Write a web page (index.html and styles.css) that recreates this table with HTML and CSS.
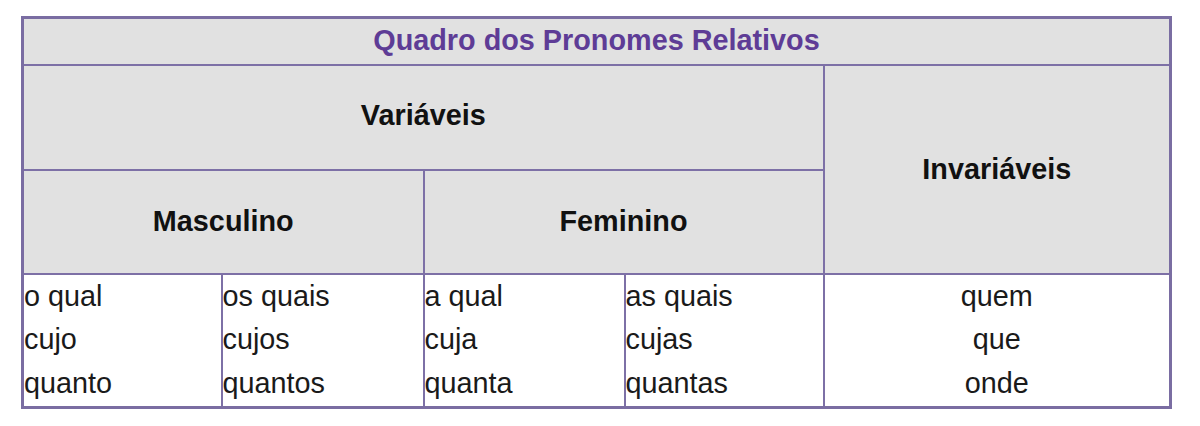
FILE: index.html
```html
<!DOCTYPE html>
<html lang="pt">
<head>
<meta charset="utf-8">
<title>Quadro dos Pronomes Relativos</title>
<link rel="stylesheet" href="styles.css">
</head>
<body>
<div class="wrap">
<table class="pron">
  <colgroup>
    <col class="c1"><col class="c2"><col class="c3"><col class="c4"><col class="c5">
  </colgroup>
  <tr class="r-title">
    <th colspan="5" class="title">Quadro dos Pronomes Relativos</th>
  </tr>
  <tr class="r-var">
    <th colspan="4" class="var">Variáveis</th>
    <th rowspan="2">Invariáveis</th>
  </tr>
  <tr class="r-gen">
    <th colspan="2">Masculino</th>
    <th colspan="2">Feminino</th>
  </tr>
  <tr class="r-data">
    <td>o qual<br>cujo<br>quanto</td>
    <td>os quais<br>cujos<br>quantos</td>
    <td>a qual<br>cuja<br>quanta</td>
    <td>as quais<br>cujas<br>quantas</td>
    <td class="center">quem<br>que<br>onde</td>
  </tr>
</table>
</div>
</body>
</html>
```
FILE: styles.css
```css
html, body {
  margin: 0;
  padding: 0;
  background: #ffffff;
}
.wrap {
  padding: 16px 0 0 21px;
}
.pron {
  border-collapse: collapse;
  table-layout: fixed;
  width: 1148px;
  font-family: "Liberation Sans", Arial, sans-serif;
  font-size: 28.8px;
  color: #1a1a1a;
  border: 3px solid #7a6da2;
}
.c1 { width: 199px; }
.c2 { width: 202px; }
.c3 { width: 201px; }
.c4 { width: 199px; }
.c5 { width: 347px; }
.pron th, .pron td {
  border: 2px solid #7d70a6;
  padding: 0;
}
.pron th {
  background: #e1e1e1;
  font-weight: bold;
  text-align: center;
  vertical-align: middle;
  color: #111111;
}
.r-title { height: 47px; }
.r-var { height: 105px; }
.r-gen { height: 104px; }
.r-data { height: 134px; }
.pron th.title {
  color: #5e3c96;
  padding-bottom: 1px;
}
.pron th.var {
  padding-bottom: 4px;
}
.pron td {
  vertical-align: top;
  text-align: left;
  line-height: 43.5px;
  padding: 0 0 1px 0;
  background: #ffffff;
}
.pron td.center {
  text-align: center;
}
```
